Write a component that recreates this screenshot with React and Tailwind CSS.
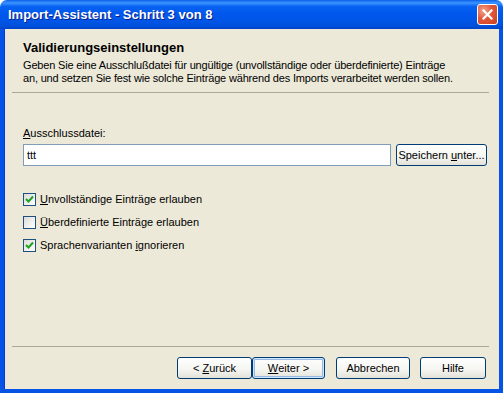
import React from 'react';

function Check({ checked }) {
  return (
    <span className="w-[13px] h-[13px] border border-[#1C5180] bg-[linear-gradient(135deg,#DCDCD7_0%,#FFFFFF_100%)] flex items-center justify-center shrink-0">
      {checked && (
        <svg width="9" height="9" viewBox="0 0 9 9">
          <path d="M1 4 L3.5 6.5 L8 1.5" fill="none" stroke="#21A121" strokeWidth="2" />
        </svg>
      )}
    </span>
  );
}

function Btn({ children, w, def }) {
  return (
    <button
      className={`h-[22px] ${w} rounded-[3px] border border-[#003C74] bg-[linear-gradient(to_bottom,#FFFFFF_0%,#F4F4F0_60%,#E3E1D8_100%)] text-[11px] text-black leading-none flex items-center justify-center ${
        def ? 'shadow-[inset_0_0_0_1px_#CEE7FF,inset_0_0_0_2px_#98B8EA]' : ''
      }`}
    >
      {children}
    </button>
  );
}

export default function App() {
  return (
    <div className="w-[503px] h-[393px] bg-white font-['Liberation_Sans',Arial,sans-serif] text-[11px] text-black">
      <div className="w-[503px] h-[393px] flex flex-col">
        {/* Title bar */}
        <div className="h-[29px] shrink-0 rounded-t-[7px] bg-[linear-gradient(to_bottom,#0A5FE8_0%,#3D95FF_10%,#0763F0_22%,#0058EE_45%,#0055E5_75%,#0050DA_90%,#0042C8_100%)] flex items-center pl-[8px] pr-[5px]">
          <span className="text-white font-bold text-[13px] [text-shadow:1px_1px_#0A1E8C]">
            Import-Assistent - Schritt 3 von 8
          </span>
          <div className="ml-auto w-[21px] h-[21px] rounded-[3px] border border-white bg-[radial-gradient(circle_at_30%_30%,#F0A590_0%,#E2573A_45%,#C8401E_100%)] flex items-center justify-center">
            <svg width="11" height="11" viewBox="0 0 11 11">
              <path d="M1.5 1.5 L9.5 9.5 M9.5 1.5 L1.5 9.5" stroke="white" strokeWidth="2.2" strokeLinecap="square" />
            </svg>
          </div>
        </div>

        {/* Body */}
        <div className="flex-1 flex flex-col bg-[#ECE9D8] border-l-4 border-r-4 border-b-4 border-[#0554E6] shadow-[inset_1px_0_#0A3ADB]">
          {/* Header */}
          <div className="pl-[19px] pt-[12px] pr-2">
            <div className="font-bold text-[13px] leading-[14px]">Validierungseinstellungen</div>
            <div className="mt-[4px] leading-[13px] tracking-[-0.17px]">
              Geben Sie eine Ausschlußdatei für ungültige (unvollständige oder überdefinierte) Einträge
              <br />
              an, und setzen Sie fest wie solche Einträge während des Imports verarbeitet werden sollen.
            </div>
          </div>
          <div className="mt-[7px] ml-[8px] mr-[10px] h-px bg-[#ACA899]" />

          {/* Content */}
          <div className="pl-[19px] pr-[8px] pt-[34px] flex-1">
            <div className="leading-[13px]">
              <span className="underline">A</span>usschlussdatei:
            </div>
            <div className="mt-[4px] flex items-center gap-[5px]">
              <div className="w-[368px] h-[22px] border border-[#7F9DB9] bg-white flex items-center pl-[3px]">ttt</div>
              <Btn w="w-[91px]">
                Speichern <span className="underline ml-[3px]">u</span>nter...
              </Btn>
            </div>

            <div className="mt-[27px] flex flex-col gap-[10px]">
              <label className="flex items-center gap-[4px] h-[13px]">
                <Check checked />
                <span>
                  <span className="underline">U</span>nvollständige Einträge erlauben
                </span>
              </label>
              <label className="flex items-center gap-[4px] h-[13px]">
                <Check />
                <span>
                  <span className="underline">Ü</span>berdefinierte Einträge erlauben
                </span>
              </label>
              <label className="flex items-center gap-[4px] h-[13px]">
                <Check checked />
                <span>
                  Sprachenvarianten <span className="underline">i</span>gnorieren
                </span>
              </label>
            </div>
          </div>

          {/* Footer */}
          <div className="ml-[8px] mr-[10px] h-px bg-[#ACA899]" />
          <div className="h-[42px] flex items-start pt-[10px] pl-[173px]">
            <Btn w="w-[75px]">
              &lt; <span className="underline ml-[3px]">Z</span>urück
            </Btn>
            <Btn w="w-[73px]" def>
              <span className="underline">W</span>eiter &gt;
            </Btn>
            <div className="w-[11px]" />
            <Btn w="w-[74px]">Abbrechen</Btn>
            <div className="w-[10px]" />
            <Btn w="w-[66px]">Hilfe</Btn>
          </div>
        </div>
      </div>
    </div>
  );
}
